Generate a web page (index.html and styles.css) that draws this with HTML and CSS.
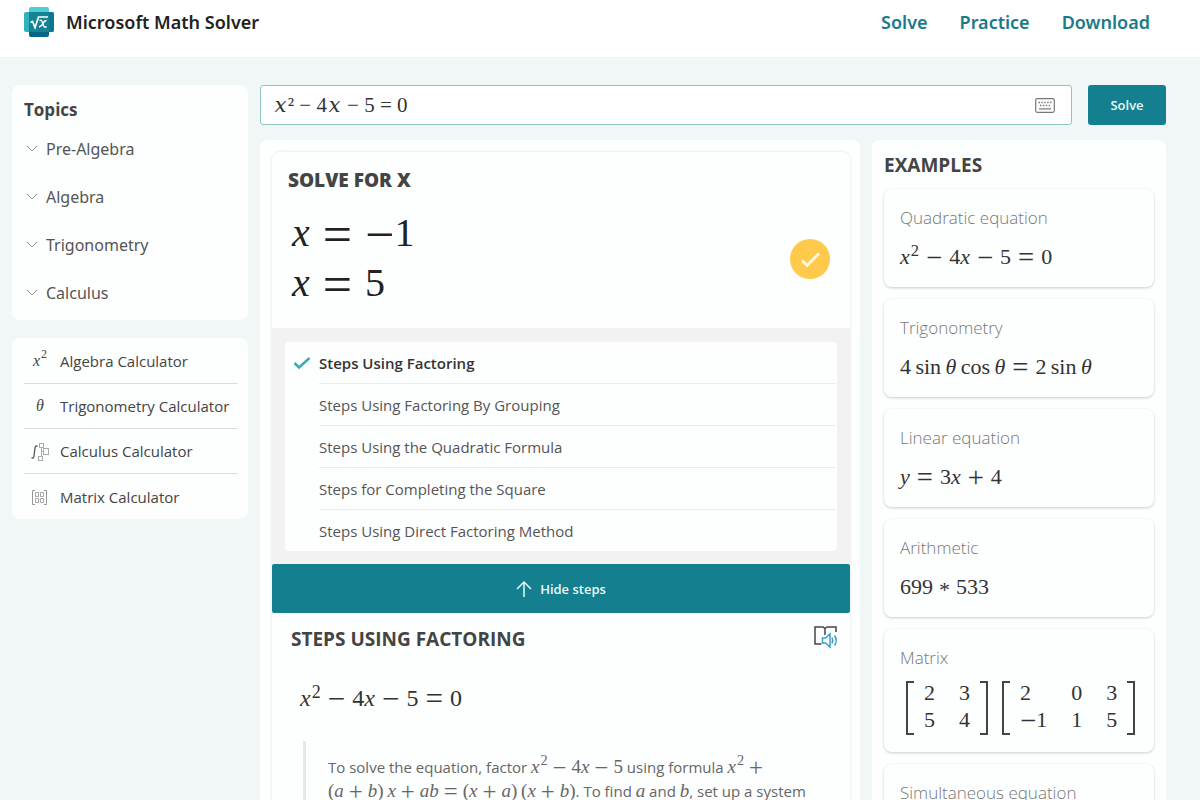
FILE: index.html
```html
<!DOCTYPE html>
<html lang="en">
<head>
  <meta charset="UTF-8">
  <meta name="viewport" content="width=device-width, initial-scale=1">
  <title>Microsoft Math Solver</title>
  <link rel="stylesheet" href="styles.css">
</head>
<body>

<header class="header">
  <a class="brand" href="#">
    <svg class="logo" width="32" height="32" viewBox="0 0 32 32" aria-hidden="true">
      <rect x="6" y="1" width="20" height="12" rx="2" fill="#50cdd3"/>
      <rect x="1" y="6" width="30" height="20" rx="2" fill="#2fb3bd"/>
      <path d="M16 6h13a2 2 0 0 1 2 2v16a2 2 0 0 1-2 2H16z" fill="#0f7591"/>
      <rect x="6" y="6" width="20" height="20" fill="#158296"/>
      <path d="M6 26h20v3a2 2 0 0 1-2 2H8a2 2 0 0 1-2-2z" fill="#08658a"/>
      <path d="M7.500 16.500l2-1 2.500 6L15.500 11H25" fill="none" stroke="#fff" stroke-width="1.700"/>
      <path d="M16.500 14.500q2-1 3 2l1 3q1 2.500 3 1.200M23.500 14.500q-2 0-3.500 3t-4 3.500" fill="none" stroke="#fff" stroke-width="1.500"/>
    </svg>
    <span>Microsoft Math Solver</span>
  </a>
  <nav class="nav">
    <a href="#">Solve</a>
    <a href="#">Practice</a>
    <a href="#">Download</a>
  </nav>
</header>

<div class="layout">
  <aside class="sidebar">
    <section class="panel topics">
      <h2>Topics</h2>
      <button class="topic"><svg width="12" height="8" viewBox="0 0 12 8"><path d="M1 1l5 5 5-5"/></svg>Pre-Algebra</button>
      <button class="topic"><svg width="12" height="8" viewBox="0 0 12 8"><path d="M1 1l5 5 5-5"/></svg>Algebra</button>
      <button class="topic"><svg width="12" height="8" viewBox="0 0 12 8"><path d="M1 1l5 5 5-5"/></svg>Trigonometry</button>
      <button class="topic"><svg width="12" height="8" viewBox="0 0 12 8"><path d="M1 1l5 5 5-5"/></svg>Calculus</button>
    </section>

    <nav class="panel calculators">
      <a href="#"><span class="calc-icon math"><i>x</i><sup>2</sup></span>Algebra Calculator</a>
      <a href="#"><span class="calc-icon math"><i>θ</i></span>Trigonometry Calculator</a>
      <a href="#"><span class="calc-icon">
        <svg width="18" height="20" viewBox="0 0 18 20" fill="none" stroke="#aaa">
          <path d="M6.500 4.500q-2-1.500-2.500 1.500l-1 8q-.5 3-2.500 1.500" stroke="#555" stroke-width="1.300"/>
          <rect x="8.500" y="1.500" width="4" height="4"/>
          <rect x="12.500" y="6.500" width="5" height="6"/>
          <rect x="7.500" y="14.500" width="4" height="4"/>
          <path d="M10.500 5.500v9M10.500 9.500h2"/>
        </svg></span>Calculus Calculator</a>
      <a href="#"><span class="calc-icon">
        <svg width="18" height="18" viewBox="0 0 18 18" fill="none" stroke="#999">
          <path d="M4 1.500H1.500v14H4M13 1.500h2.500v14H13"/>
          <path d="M4.500 3.500h3v4h-3zM9.500 3.500h3v4h-3zM4.500 9.500h3v4h-3zM9.500 9.500h3v4h-3z" stroke="#aaa"/>
        </svg></span>Matrix Calculator</a>
    </nav>
  </aside>

  <main class="main">
    <form class="search">
      <div class="search-box">
        <input class="search-input" type="text" value="𝑥² − 4𝑥 − 5 = 0" aria-label="Math problem">
        <button class="keyboard-btn" type="button" aria-label="Keyboard">
          <svg width="20" height="15" viewBox="0 0 20 15" fill="none" stroke="#777">
            <rect x=".700" y=".700" width="18.600" height="13.600" rx="1.500" stroke-width="1.200"/>
            <path d="M3.500 4.500h13M5 7.500h10" stroke-width="1.400" stroke-dasharray="1.500 1.400"/>
            <path d="M4 10.900h12" stroke-width="1.200"/>
          </svg>
        </button>
      </div>
      <button class="solve-btn" type="button">Solve</button>
    </form>

    <div class="columns">
      <section class="panel result">
        <div class="card">
          <div class="answer">
            <div>
              <h2 class="heavy">SOLVE FOR X</h2>
              <div class="solutions math">
                <div><i>x</i><span class="op">=</span><span class="neg">−</span>1</div>
                <div><i>x</i><span class="op">=</span>5</div>
              </div>
            </div>
            <svg class="check" width="40" height="40" viewBox="0 0 40 40">
              <circle cx="20" cy="20" r="20" fill="#ffca4b"/>
              <path d="M12 21.500l5 5L29 14.500" fill="none" stroke="#fff8df" stroke-width="3"/>
            </svg>
          </div>

          <div class="methods">
            <ul>
              <li><svg width="18" height="14" viewBox="0 0 18 14"><path d="M1.500 7l4.500 4.500L16.500 2"/></svg><button class="selected">Steps Using Factoring</button></li>
              <li><button>Steps Using Factoring By Grouping</button></li>
              <li><button>Steps Using the Quadratic Formula</button></li>
              <li><button>Steps for Completing the Square</button></li>
              <li><button>Steps Using Direct Factoring Method</button></li>
            </ul>
          </div>

          <button class="hide-btn">
            <svg width="16" height="18" viewBox="0 0 16 18"><path d="M8 17V2M1 9l7-7 7 7"/></svg>
            Hide steps
          </button>

          <div class="steps">
            <div class="steps-title">
              <h2>STEPS USING FACTORING</h2>
              <button class="reader-btn" aria-label="Read aloud">
                <svg width="26" height="24" viewBox="0 0 26 24" fill="none" stroke-width="1.500">
                  <path d="M8.500 19H2V2h8l2 1.500L14 2h9v5M12 3.500V10" stroke="#444"/>
                  <path d="M9.500 13h3l4.500-4v13l-4.500-4h-3zM19 12.500q1.500 3 0 6M21.500 10.500q3.500 5 0 10" stroke="#3b9fc4"/>
                </svg>
              </button>
            </div>
            <div class="equation math"><i>x</i><sup>2</sup><span class="op">−</span>4<i>x</i><span class="op">−</span>5<span class="op">=</span>0</div>
            <p class="explain">To solve the equation, factor <span class="math"><i>x</i><sup>2</sup><span class="op">−</span>4<i>x</i><span class="op">−</span>5</span> using formula <span class="math"><i>x</i><sup>2</sup><span class="op">+</span></span><br>
              <span class="math">(<i>a</i><span class="op">+</span><i>b</i>)&thinsp;<i>x</i><span class="op">+</span><i>ab</i><span class="op">=</span>(<i>x</i><span class="op">+</span><i>a</i>)&thinsp;(<i>x</i><span class="op">+</span><i>b</i>)</span>. To find <span class="math"><i>a</i></span> and <span class="math"><i>b</i></span>, set up a system</p>
          </div>
        </div>
      </section>

      <aside class="panel examples">
        <h2>EXAMPLES</h2>
        <a class="example" href="#">
          <span class="label">Quadratic equation</span>
          <span class="math"><i>x</i><sup>2</sup><span class="op">−</span>4<i>x</i><span class="op">−</span>5<span class="op">=</span>0</span>
        </a>
        <a class="example" href="#">
          <span class="label">Trigonometry</span>
          <span class="math">4&thinsp;sin&thinsp;<i>θ</i>&thinsp;cos&thinsp;<i>θ</i><span class="op">=</span>2&thinsp;sin&thinsp;<i>θ</i></span>
        </a>
        <a class="example" href="#">
          <span class="label">Linear equation</span>
          <span class="math"><i>y</i><span class="op">=</span>3<i>x</i><span class="op">+</span>4</span>
        </a>
        <a class="example" href="#">
          <span class="label">Arithmetic</span>
          <span class="math">699<span class="star">*</span>533</span>
        </a>
        <a class="example" href="#">
          <span class="label">Matrix</span>
          <span class="matrices math">
            <span class="matrix two"><span>2</span><span>3</span><span>5</span><span>4</span></span>
            <span class="matrix three"><span>2</span><span>0</span><span>3</span><span><span class="neg">−</span>1</span><span>1</span><span>5</span></span>
          </span>
        </a>
        <a class="example" href="#">
          <span class="label">Simultaneous equation</span>
        </a>
      </aside>
    </div>
  </main>
</div>

</body>
</html>
```
FILE: styles.css
```css
* {
  box-sizing: border-box;
}

body {
  margin: 0;
  background: #f1f7f7;
  color: #444;
  font-family: "Open Sans", "Noto Sans", sans-serif;
  font-size: 15px;
}

a {
  color: inherit;
  text-decoration: none;
}

button {
  font-family: inherit;
  border: none;
  background: none;
  padding: 0;
  cursor: pointer;
}

h2 {
  margin: 0;
  font-size: 19px;
  line-height: 24px;
  font-weight: 700;
}

h2.heavy {
  font-weight: 800;
}

.math {
  font-family: "Liberation Serif", serif;
}

.math sup {
  font-size: 75%;
  line-height: 0;
  vertical-align: 8px;
  margin-left: 1px;
}

/* operators are drawn wider than the digits */
.op,
.neg {
  font-size: 130%;
  line-height: 0;
  vertical-align: -3px;
}

.op {
  margin: 0 7px;
}

.star {
  margin: 0 6px;
  line-height: 0;
  vertical-align: -3px;
}

/* Header */
.header {
  display: flex;
  justify-content: space-between;
  align-items: flex-start;
  height: 57px;
  padding: 5px 50px 0 23px;
  background: #fff;
}

.brand {
  display: flex;
  align-items: center;
  gap: 11px;
  color: #222;
  font-family: "Noto Sans", "Open Sans", sans-serif;
  font-size: 18px;
  line-height: 34px;
  font-weight: 600;
}

.nav {
  display: flex;
  gap: 32px;
  color: #1a7a88;
  font-family: "Noto Sans", "Open Sans", sans-serif;
  font-size: 18px;
  line-height: 34px;
  font-weight: 600;
}

/* Page columns */
.layout {
  display: flex;
  align-items: flex-start;
  gap: 12px;
  padding: 28px 34px 0 12px;
}

.panel {
  background: #fdfefe;
  border-radius: 8px;
}

.sidebar {
  flex: 0 0 236px;
}

.topics {
  padding: 13px 12px 3px;
}

.topics h2 {
  margin-bottom: 3px;
  font-size: 17px;
}

.topic {
  display: flex;
  align-items: center;
  gap: 8px;
  width: 100%;
  height: 48px;
  padding-left: 2px;
  color: #555;
  font-family: "Noto Sans", "Open Sans", sans-serif;
  font-size: 16px;
}

.topic svg {
  fill: none;
  stroke: #888;
}

.calculators {
  margin-top: 18px;
  padding: 1px 10px 0 12px;
}

.calculators a {
  display: flex;
  align-items: center;
  height: 45px;
  border-bottom: 1px solid #ddd;
}

.calculators a:last-child {
  border-bottom: none;
}

.calc-icon {
  width: 32px;
  margin-right: 4px;
  text-align: center;
}

.calc-icon svg {
  vertical-align: middle;
}

.calc-icon.math {
  font-size: 16px;
}

.main {
  flex: 1;
  min-width: 0;
}

/* Search */
.search {
  display: flex;
  gap: 16px;
}

.search-box {
  display: flex;
  align-items: center;
  flex: 1;
  height: 40px;
  padding: 0 16px 0 12px;
  background: #fff;
  border: 1px solid #8fc6c2;
  border-radius: 3px;
}

.search-input {
  flex: 1;
  min-width: 0;
  padding: 0;
  border: none;
  outline: none;
  background: none;
  color: #333;
  font-family: "Liberation Serif", "DejaVu Math TeX Gyre", "DejaVu Serif", serif;
  font-size: 21px;
}

.keyboard-btn {
  display: flex;
}

.solve-btn {
  width: 78px;
  height: 40px;
  background: #14808f;
  border-radius: 3px;
  color: #e8fafa;
  font-size: 13px;
  font-weight: 600;
}

.columns {
  display: flex;
  align-items: flex-start;
  gap: 12px;
  margin-top: 15px;
}

/* Result */
.result {
  flex: 1;
  min-width: 0;
  padding: 12px 10px 12px 12px;
}

.card {
  border-radius: 8px;
  box-shadow: 0 0 3px rgba(0, 0, 0, 0.12);
}

.answer {
  display: flex;
  align-items: center;
  justify-content: space-between;
  padding: 16px 20px 20px 16px;
}

.solutions {
  margin-top: 16px;
  padding-left: 4px;
  color: #222;
  font-size: 40px;
  line-height: 50px;
}

.solutions .op {
  margin: 0 13px;
}

.solutions .op,
.solutions .neg {
  vertical-align: -6px;
}

.check {
  margin-top: 42px;
}

.methods {
  padding: 14px 13px 13px;
  background: #f2f2f2;
}

.methods ul {
  margin: 0;
  padding: 0 1px 0 8px;
  list-style: none;
  background: #fdfefe;
  border-radius: 4px;
}

.methods li {
  display: flex;
  align-items: center;
  justify-content: flex-end;
  gap: 8px;
}

.methods li svg {
  fill: none;
  stroke: #3aabb8;
  stroke-width: 2.500;
}

.methods li button {
  width: calc(100% - 26px);
  height: 42px;
  border-bottom: 1px solid #ececec;
  color: #555;
  font-size: 15px;
  text-align: left;
}

.methods li:last-child button {
  height: 41px;
  border-bottom: none;
}

.methods li button.selected {
  color: #333;
  font-weight: 600;
}

.hide-btn {
  display: flex;
  align-items: center;
  justify-content: center;
  gap: 8px;
  width: 100%;
  height: 49px;
  background: #14808f;
  border-radius: 2px;
  color: #e8fafa;
  font-size: 13px;
  font-weight: 600;
}

.hide-btn svg {
  fill: none;
  stroke: #e8fafa;
  stroke-width: 1.500;
}

.steps {
  padding: 12px 11px 20px 19px;
}

.steps-title {
  display: flex;
  justify-content: space-between;
  align-items: center;
}

.steps .equation {
  padding: 31px 0 29px 9px;
  color: #333;
  font-size: 24px;
  line-height: 28px;
}

.explain {
  margin: 0 0 0 12px;
  padding: 14px 0 16px 22px;
  border-left: 3px solid #e8e8e8;
  color: #666;
  line-height: 24px;
}

.explain .math {
  font-size: 19px;
  line-height: 20px;
}

.explain .op {
  margin: 0 5px;
}

/* Examples */
.examples {
  flex: 0 0 294px;
  padding: 13px 12px;
}

.example {
  display: block;
  margin-top: 12px;
  padding: 17px 16px 14px;
  border-radius: 8px;
  box-shadow: 0 1px 3px rgba(0, 0, 0, 0.2);
  color: #333;
}

.example .label {
  display: block;
  margin-bottom: 11px;
  color: #777;
  font-size: 17px;
  font-weight: 300;
  line-height: 24px;
}

.example .math {
  display: block;
  font-size: 22px;
  line-height: 32px;
}

.example .matrices {
  display: flex;
  gap: 14px;
  padding: 0 0 3px 6px;
}

.matrices .matrix {
  position: relative;
  display: grid;
  gap: 4px 24px;
  padding: 0 16px 4px;
  line-height: 23px;
  border-left: 2px solid #444;
  border-right: 2px solid #444;
}

/* bracket ends */
.matrix::before,
.matrix::after {
  content: "";
  position: absolute;
  top: 0;
  bottom: 0;
  width: 6px;
  border-top: 2px solid #444;
  border-bottom: 2px solid #444;
}

.matrix::before {
  left: 0;
}

.matrix::after {
  right: 0;
}

.matrix.two {
  grid-template-columns: auto auto;
}

.matrix.three {
  grid-template-columns: auto auto auto;
}
```
